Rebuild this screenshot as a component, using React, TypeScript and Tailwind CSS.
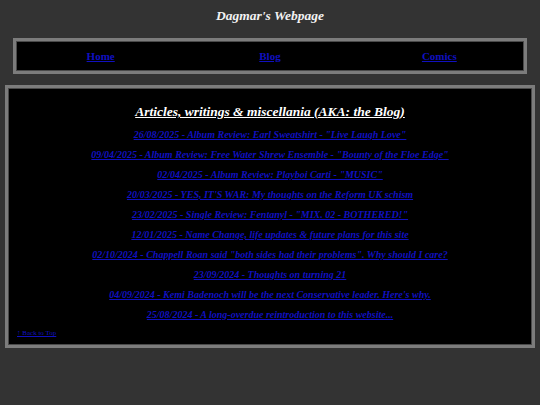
import React from "react";

const posts = [
  '26/08/2025 - Album Review: Earl Sweatshirt - "Live Laugh Love"',
  '09/04/2025 - Album Review: Free Water Shrew Ensemble - "Bounty of the Floe Edge"',
  '02/04/2025 - Album Review: Playboi Carti - "MUSIC"',
  "20/03/2025 - YES, IT'S WAR: My thoughts on the Reform UK schism",
  '23/02/2025 - Single Review: Fentanyl - "MIX. 02 - BOTHERED!"',
  "12/01/2025 - Name Change, life updates & future plans for this site",
  '02/10/2024 - Chappell Roan said "both sides had their problems". Why should I care?',
  "23/09/2024 - Thoughts on turning 21",
  "04/09/2024 - Kemi Badenoch will be the next Conservative leader. Here's why.",
  "25/08/2024 - A long-overdue reintroduction to this website...",
];

const box = "border-[3px] border-[#7c7c7c] bg-black shadow-[inset_0_0_0_1px_#4a4a4a]";

export default function App() {
  return (
    <div className="min-h-[405px] w-[540px] bg-[#333333] font-['Liberation_Serif',serif]">
      <h1 className="pt-[7px] text-center text-[13.5px] leading-[18px] font-bold italic text-[#f2f2f2]">
        Dagmar&apos;s Webpage
      </h1>

      <nav className={`mx-[13px] mt-[13px] grid h-[36px] grid-cols-3 items-center ${box}`}>
        {["Home", "Blog", "Comics"].map((l) => (
          <a key={l} href="#" className="text-center text-[11px] font-bold text-[#1010c0] underline">
            {l}
          </a>
        ))}
      </nav>

      <main className={`mx-[5px] mt-[11px] flex h-[263px] flex-col ${box}`}>
        <h2 className="mt-[15px] text-center text-[13.5px] leading-[18px] font-bold italic text-white underline">
          Articles, writings &amp; miscellania (AKA: the Blog)
        </h2>
        <ul className="mt-[4px] flex flex-col items-center">
          {posts.map((p) => (
            <li key={p} className="h-[20px] text-[10px] leading-[20px]">
              <a href="#" className="font-bold italic text-[#1010c0] underline">
                {p}
              </a>
            </li>
          ))}
        </ul>
        <a href="#" className="mt-[3px] ml-[9px] text-[7px] leading-[10px] text-[#1010c0] underline">
          ↑ Back to Top
        </a>
      </main>
    </div>
  );
}
